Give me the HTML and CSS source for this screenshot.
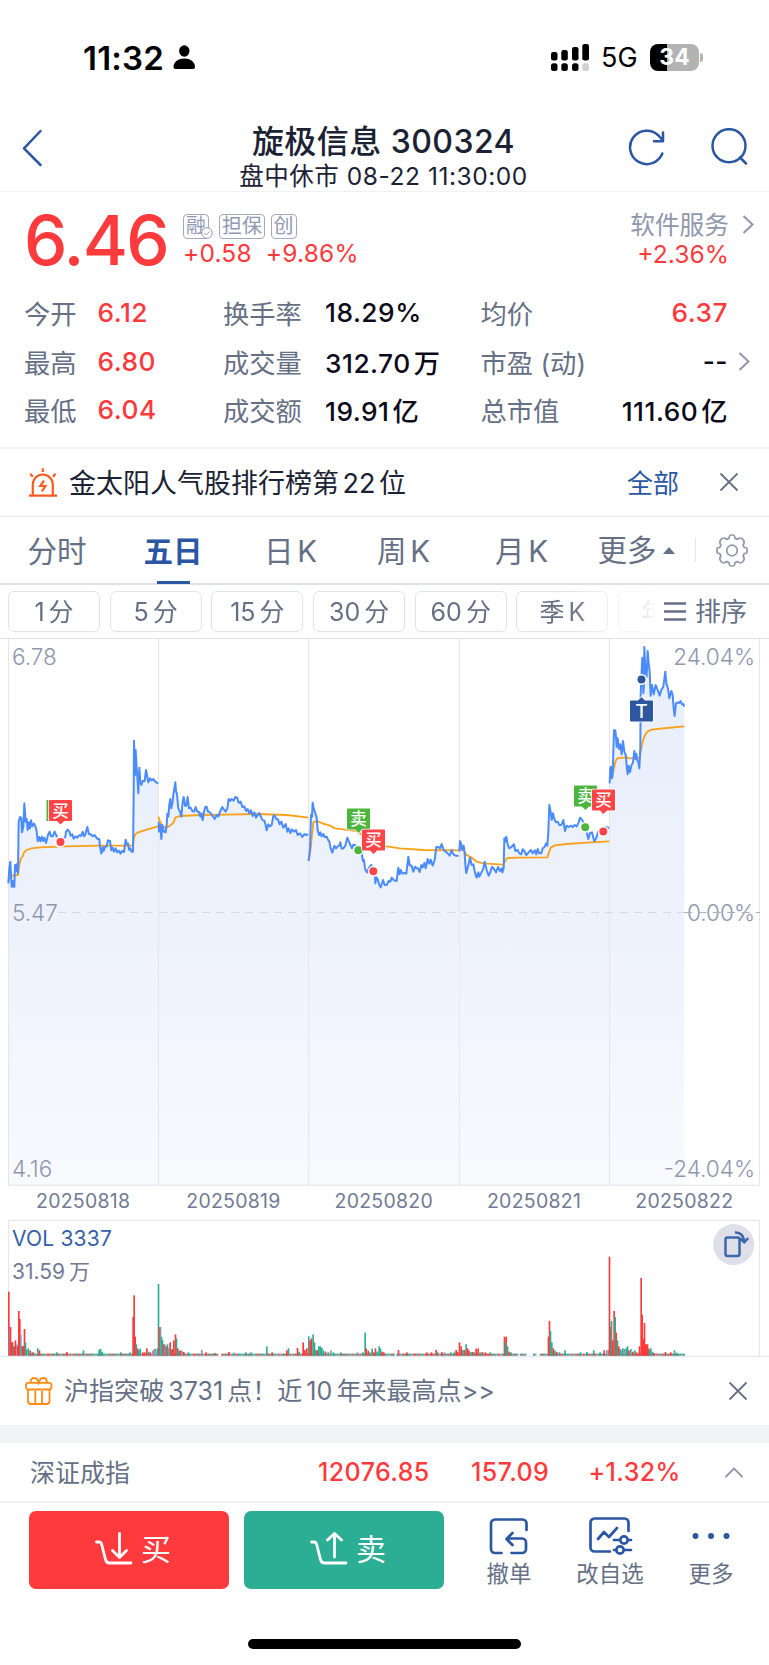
FILE: index.html
```html
<!DOCTYPE html>
<html lang="zh-CN">
<head>
<meta charset="UTF-8">
<meta name="viewport" content="width=device-width, initial-scale=1.0">
<title>旋极信息 300324</title>
<link rel="stylesheet" href="styles.css">
</head>
<body>
<div class="status-bar">
  <span class="time">11:32</span>
  <svg class="person" width="23" height="25" viewBox="0 0 23 25"><ellipse cx="11.3" cy="6" rx="5.2" ry="5.8"/><path d="M0.5 22c0-5 5-8.400 10.800-8.400S22 17 22 22c0 1.300-.8 2-2 2H2.500c-1.200 0-2-.7-2-2z"/></svg>
  <svg class="signal" width="39" height="28" viewBox="0 0 39 28">
    <rect x="0" y="8" width="6.500" height="8.500" rx="2.200"/><rect x="10.300" y="6" width="6.500" height="10.500" rx="2.200"/><rect x="21" y="3" width="6.500" height="13.500" rx="2.200"/><rect x="31.300" y="0" width="6.700" height="16.500" rx="2.200"/>
    <rect x="0" y="19.300" width="6.500" height="7.700" rx="2.500"/><rect x="10.300" y="19.300" width="6.500" height="7.700" rx="2.500"/><rect x="21" y="19.300" width="6.500" height="7.700" rx="2.500"/><rect x="31.300" y="19.300" width="6.700" height="7.700" rx="2.500" fill="#d0d0d0"/>
  </svg>
  <span class="network">5G</span>
  <div class="battery">34</div>
  <div class="battery-tip"></div>
</div>

<header class="header">
  <svg class="back" width="22" height="40" viewBox="0 0 22 40"><path d="M19.500 3 3 20.300 19.500 37"/></svg>
  <div class="title">
    <h1>旋极信息 300324</h1>
    <p>盘中休市 08-22 11:30:00</p>
  </div>
  <svg class="refresh" width="38" height="38" viewBox="0 0 38 38"><path d="M35.300 25.500A16.700 16.700 0 1 1 31.500 7.500L35 11.500M36 4.500v8.700h-9"/></svg>
  <svg class="search" width="38" height="38" viewBox="0 0 38 38"><circle cx="18" cy="17.700" r="16.500"/><path d="M29 29.500 35 35.500"/></svg>
</header>

<section class="quote">
  <div class="price">6.46</div>
  <div class="change">
    <div class="badges">
      <span class="badge margin">融<svg width="12" height="12" viewBox="0 0 12 12"><circle cx="6" cy="6" r="5.300"/><path d="M3.300 6 5.300 8 8.800 4.300"/></svg></span>
      <span class="badge">担保</span>
      <span class="badge">创</span>
    </div>
    <div class="delta"><span>+0.58</span><span>+9.86%</span></div>
  </div>
  <div class="sector">
    <span class="sector-name">软件服务</span>
    <span class="sector-change">+2.36%</span>
  </div>
  <svg class="more" width="12" height="19" viewBox="0 0 12 19"><path d="M1.500 1 10.500 9.500 1.500 18"/></svg>
</section>

<section class="stats">
  <span>今开</span><b class="red">6.12</b><span>换手率</span><b>18.29%</b><span>均价</span><b class="right red">6.37</b><i></i>
  <span>最高</span><b class="red">6.80</b><span>成交量</span><b>312.70<em>万</em></b><span>市盈 (动)</span><b class="right">--</b><svg width="12" height="19" viewBox="0 0 12 19"><path d="M1.500 1 10.500 9.500 1.500 18"/></svg>
  <span>最低</span><b class="red">6.04</b><span>成交额</span><b>19.91<em>亿</em></b><span>总市值</span><b class="right">111.60<em>亿</em></b><i></i>
</section>

<section class="notice">
  <svg class="siren" width="30" height="31" viewBox="0 0 30 31"><path d="M1 28.700H29M4.800 28V17.500a10 10 0 0 1 20 0V28M14.800 1.200V5M2.200 6.800 4.800 9.800M27.600 6.800 25 9.800"/><path class="bolt" d="M16 13.500 12.300 19h5L14 24.500"/></svg>
  <span class="notice-text">金太阳人气股排行榜第<em>22</em>位</span>
  <a class="all">全部</a>
  <svg class="close" width="20" height="20" viewBox="0 0 20 20"><path d="M1.500 1.500 18.500 18.500M18.500 1.500 1.500 18.500"/></svg>
</section>

<nav class="tabs">
  <a>分时</a>
  <a class="active">五日</a>
  <a>日 K</a>
  <a>周 K</a>
  <a>月 K</a>
  <a class="tab-more">更多<svg width="12" height="7" viewBox="0 0 12 7"><path d="M6 0 12 7H0z"/></svg></a>
  <span class="divider"></span>
  <svg class="gear" width="32" height="33" viewBox="-16 -16.500 32 33"><path d="M-3-12.200C-2.700-16-1.500-15.500 0-15.500S2.700-16 3-12.200L5.600-11.100C8.600-13.500 9.300-12.500 10.500-11.400S13.500-8.600 11.100-5.600L12.200-3C16-2.700 15-1.500 15 0S16 2.700 12.200 3L11.100 5.600C13.500 8.600 11.600 10.300 10.500 11.400S8.600 13.500 5.600 11.100L3 12.200C2.700 16 1.500 15.500 0 15.500S-2.700 16-3 12.200L-5.600 11.100C-8.600 13.500-9.400 12.500-10.500 11.400S-13.500 8.600-11.100 5.600L-12.200 3C-16 2.700-15 1.500-15 0S-16-2.700-12.200-3L-11.100-5.600C-13.500-8.600-11.600-10.300-10.500-11.400S-8.600-13.500-5.600-11.100Z"/><circle r="5.300"/></svg>
</nav>

<div class="periods">
  <div class="period-list">
    <a>1 分</a><a>5 分</a><a>15 分</a><a>30 分</a><a>60 分</a><a>季 K</a><a>年 K</a>
  </div>
  <div class="sort">
    <svg width="22" height="19" viewBox="0 0 22 19"><path d="M0 1.500H22M0 9.500H22M0 17.500H22"/></svg>
    <span>排序</span>
  </div>
</div>

<svg class="chart" width="769" height="547" viewBox="0 4 769 547">
  <defs>
    <linearGradient id="fill" x1="0" y1="420" x2="0" y2="1650" gradientUnits="userSpaceOnUse">
      <stop offset="0" stop-color="#eaf0fb"/>
      <stop offset="0.400" stop-color="#eef2fc"/>
      <stop offset="1" stop-color="#f9fafe"/>
    </linearGradient>
  </defs>
  <g id="areas" transform="scale(0.33333)"></g>
  <path class="grid" d="M8.500 4V550M158.500 4V550M308.700 4V550M459.300 4V550M609.500 4V550M759.500 4V550M8 550.300H760"/>
  <path class="zero" d="M58 277.500H684"/>
  <g id="lines" transform="scale(0.33333)"></g>

  <g class="axis">
    <text x="12" y="29.500">6.78</text>
    <text x="12" y="285.500">5.47</text>
    <text x="12" y="541.500">4.16</text>
    <text class="end" x="755" y="29.500">24.04%</text>
    <text class="end" x="755" y="285.500">0.00%</text>
    <text class="end" x="755" y="541.500">-24.04%</text>
  </g>
  <path class="zero dark" d="M684 277.500H760"/>

  <!-- buy / sell markers -->
  <g class="marker">
    <path class="sell" d="M46.500 165h20v21h-20z"/>
    <circle class="sell" cx="59.500" cy="207" r="4"/>
    <path class="buy" d="M50 165h21a1 1 0 0 1 1 1v19a1 1 0 0 1-1 1H64l-3.500 3.500L57 186H50a1 1 0 0 1-1-1V166a1 1 0 0 1 1-1z"/>
    <text x="60.500" y="181.500">买</text>
    <circle class="buy" cx="60.500" cy="207" r="4"/>

    <path class="sell" d="M348 173.500h21a1 1 0 0 1 1 1v19a1 1 0 0 1-1 1H362l-3.500 3.500-3.500-3.500H348a1 1 0 0 1-1-1v-19a1 1 0 0 1 1-1z"/>
    <text x="358.500" y="190">卖</text>
    <circle class="sell" cx="358.300" cy="215.300" r="4"/>
    <path class="buy" d="M363 194.500h21a1 1 0 0 1 1 1v19a1 1 0 0 1-1 1H377l-3.500 3.500-3.500-3.500H363a1 1 0 0 1-1-1v-19a1 1 0 0 1 1-1z"/>
    <text x="373.500" y="211">买</text>
    <circle class="buy" cx="373.300" cy="236.300" r="4"/>

    <path class="sell" d="M575 150.500h21a1 1 0 0 1 1 1v19a1 1 0 0 1-1 1H589l-3.500 3.500-3.500-3.500H575a1 1 0 0 1-1-1v-19a1 1 0 0 1 1-1z"/>
    <text x="585.500" y="167">卖</text>
    <circle class="sell" cx="585.200" cy="192.300" r="4"/>
    <path class="buy" d="M593 154.500h21a1 1 0 0 1 1 1v19a1 1 0 0 1-1 1H607l-3.500 3.500-3.500-3.500H593a1 1 0 0 1-1-1v-19a1 1 0 0 1 1-1z"/>
    <text x="603.500" y="171">买</text>
    <circle class="buy" cx="603.300" cy="196.500" r="4"/>

    <path class="both" d="M631 65.500h7l3.500-3.500 3.500 3.500h7a1 1 0 0 1 1 1v19a1 1 0 0 1-1 1H631a1 1 0 0 1-1-1v-19a1 1 0 0 1 1-1z"/>
    <text class="t" x="641.500" y="82.500">T</text>
    <circle class="both" cx="641.500" cy="44.500" r="4"/>
  </g>
</svg>

<div class="dates">
  <span>20250818</span><span>20250819</span><span>20250820</span><span>20250821</span><span>20250822</span>
</div>

<svg class="volume" width="769" height="137" viewBox="0 60 769 137">
  <path class="grid" d="M8 60.500H760M8.500 60V196M759.500 60V196M0 196.400H769"/>
  <g id="bars" transform="scale(0.33333)"></g>
  <text class="vol" x="12" y="85.500">VOL 3337</text>
  <text class="cap" x="12" y="118.800">31.59<tspan dx="4">万</tspan></text>
  <circle class="rotate-bg" cx="733.700" cy="84.600" r="20.500"/>
  <path class="rotate" d="M727.500 77.500h10a2 2 0 0 1 2 2v14.500a2 2 0 0 1-2 2h-10a2 2 0 0 1-2-2v-14.500a2 2 0 0 1 2-2zM735 72.500c5-.3 8.500 3 9.300 9.200M740 78.500l4.300 3.700 4-4.200"/>
</svg>

<section class="promo">
  <svg class="gift" width="28" height="28" viewBox="0 0 28 28"><rect x="1" y="5.800" width="25.500" height="6.700" rx="2.500"/><path d="M3 12.500V24a3 3 0 0 0 3 3H21.500a3 3 0 0 0 3-3V12.500M10.300 14V26.500M17 14V26.500M5.500 5.500C5.500 2 7.500 1 9.200 1S12.800 3 13.700 5.800C14.600 3 16.500 1 18.200 1S22 2 22 5.500"/></svg>
  <span class="promo-text">沪指突破<em>3731</em>点！近<em>10</em>年来最高点&gt;&gt;</span>
  <svg class="close" width="20" height="20" viewBox="0 0 20 20"><path d="M1.500 1.500 18.500 18.500M18.500 1.500 1.500 18.500"/></svg>
</section>

<section class="index-row">
  <span class="index-name">深证成指</span>
  <b class="index-value">12076.85</b>
  <b class="index-diff">157.09</b>
  <b class="index-pct">+1.32%</b>
  <svg class="up" width="20" height="11" viewBox="0 0 20 11"><path d="M1.500 10 10 1.500 18.500 10"/></svg>
</section>

<footer class="actions">
  <button class="btn btn-buy">
    <svg width="38" height="34" viewBox="0 0 38 34"><path d="M1.500 10H4Q6 10 6.700 12.500L10.500 27.500Q11.500 31 14.500 31H36M24.500 1.500V25M17.500 18.500 24.500 25.500 31.500 18.500"/></svg>
    <span>买</span>
  </button>
  <button class="btn btn-sell">
    <svg width="38" height="34" viewBox="0 0 38 34"><path d="M1.500 10H4Q6 10 6.700 12.500L10.500 27.500Q11.500 31 14.500 31H36M24.500 25V1.500M17.500 8 24.500 1.500 31.500 8"/></svg>
    <span>卖</span>
  </button>
  <a class="tool">
    <svg width="42" height="40" viewBox="0 0 42 40"><path d="M13.500 37H7a4 4 0 0 1-4-4V7.500a4 4 0 0 1 4-4H34.500a4 4 0 0 1 4 4V14M23.500 37H34a4 4 0 0 0 4-4V26.500a4 4 0 0 0-4-4H19M24.500 17 18.500 23 24.500 29"/></svg>
    <span>撤单</span>
  </a>
  <a class="tool">
    <svg width="46" height="40" viewBox="0 0 46 40"><path d="M23 35.500H7.500a4 4 0 0 1-4-4V6.500a4 4 0 0 1 4-4H37.500a4 4 0 0 1 4 4V15M11 23 17 16 22 21 30 12M27 24H32.500M41.500 24H44M27 34H29M37.500 34H44"/><circle cx="37" cy="24" r="3.700"/><circle cx="33" cy="34" r="3.700"/></svg>
    <span>改自选</span>
  </a>
  <a class="tool">
    <svg class="dots" width="40" height="40" viewBox="0 0 40 40"><circle cx="4.500" cy="20" r="3"/><circle cx="20" cy="20" r="3"/><circle cx="35.500" cy="20" r="3"/></svg>
    <span>更多</span>
  </a>
</footer>
<div class="home-bar"></div>

<script>
// price and average points per trading day
const days = [
  {
    price: '25,745 28,700 31,680 33,715 35,755 38,738 40,755 43,755 45,690 48,708 50,688 54,715 56,560 60,546 64,550 66,592 70,575 73,505 77,560 80,552 83,585 87,562 90,580 93,556 97,574 102,566 107,576 110,590 113,618 118,606 121,619 126,605 129,618 133,608 138,624 144,600 149,590 153,604 158,604 164,590 170,604 176,612 182,621 190,612 196,606 198,590 203,584 208,590 212,602 217,598 221,611 227,604 232,608 238,600 243,603 248,590 252,604 256,598 262,576 267,598 273,598 278,604 283,600 288,606 293,612 298,612 300,635 304,656 308,636 311,648 315,636 320,634 324,616 330,618 334,646 338,638 342,650 347,640 351,652 357,647 361,656 366,648 372,651 377,614 381,628 384,626 387,644 391,640 394,650 399,650 401,480 402,317 405,420 407,345 410,400 413,440 415,475 418,398 421,440 424,450 428,438 434,438 438,405 441,420 445,442 450,430 455,436 460,432 466,440 474,446',
    avg: '25,740 30,728 36,722 54,720 58,690 62,672 68,664 72,652 80,645 95,640 120,637 200,634 300,632 399,632 402,608 406,598 415,592 440,584 474,574'
  },
  {
    price: '476,560 477,590 481,570 484,612 487,570 492,590 497,592 500,570 502,536 505,545 508,508 511,492 514,520 518,500 521,472 526,442 528,468 531,478 535,520 540,530 544,545 547,510 551,486 555,512 559,512 563,486 567,520 572,518 577,528 582,530 587,516 592,530 597,530 601,545 604,535 608,556 612,530 616,516 620,515 624,530 630,532 636,540 644,552 650,540 655,545 660,530 667,516 672,524 677,530 682,520 686,492 690,498 695,492 701,497 706,486 712,489 716,503 722,500 727,516 733,514 738,528 743,522 748,535 753,526 758,543 763,532 768,548 773,540 778,534 784,548 788,556 793,557 797,570 800,586 805,568 810,574 815,570 820,543 824,541 829,552 834,553 839,568 844,560 850,578 857,567 862,590 866,580 871,594 876,583 882,590 888,585 893,600 900,595 907,606 913,597 918,600 925,598',
    avg: '475,545 480,560 490,577 505,575 520,564 526,548 540,543 600,540 680,539 770,537 860,540 926,548'
  },
  {
    price: '926,678 930,640 933,540 936,545 938,503 941,520 945,532 950,548 953,585 957,600 961,592 965,604 970,597 974,606 980,605 984,614 988,620 992,640 997,653 1003,632 1008,640 1013,634 1018,632 1021,622 1025,641 1030,640 1036,632 1042,608 1047,620 1052,632 1056,640 1060,629 1065,630 1075,646 1085,655 1089,678 1092,675 1095,702 1101,712 1106,700 1114,690 1120,708 1125,725 1126,745 1129,727 1134,735 1137,748 1142,757 1145,748 1149,735 1154,750 1160,750 1166,738 1171,740 1175,728 1182,736 1190,738 1195,698 1199,718 1202,705 1208,716 1214,714 1219,716 1225,665 1229,690 1235,693 1240,710 1245,695 1250,700 1254,700 1259,711 1264,690 1268,697 1273,684 1277,700 1283,672 1288,686 1292,674 1298,692 1304,675 1309,636 1315,636 1320,640 1325,627 1331,645 1337,650 1343,655 1349,662 1355,645 1360,658 1367,662 1376,662',
    avg: '926,678 932,640 936,600 940,562 950,558 970,566 990,572 1005,580 1030,583 1070,588 1120,625 1160,634 1200,640 1270,645 1376,646'
  },
  {
    price: '1378,650 1380,618 1384,628 1386,645 1391,632 1394,655 1397,700 1399,714 1405,690 1410,668 1415,690 1420,688 1425,712 1430,728 1435,712 1438,725 1443,715 1450,700 1454,680 1460,705 1466,722 1470,715 1476,695 1482,702 1488,712 1494,696 1500,708 1505,700 1507,712 1511,700 1513,610 1516,620 1519,605 1523,628 1528,640 1534,636 1542,628 1546,648 1553,645 1558,655 1564,658 1568,643 1573,648 1579,660 1586,652 1593,645 1598,655 1605,646 1609,658 1613,642 1618,655 1624,655 1628,640 1634,636 1638,625 1642,632 1645,590 1648,510 1652,530 1655,555 1659,535 1663,552 1668,562 1673,560 1678,570 1684,570 1690,555 1695,588 1700,572 1706,576 1713,572 1718,576 1724,570 1730,574 1736,562 1740,548 1745,553 1750,562 1756,577 1760,592 1765,612 1770,594 1776,592 1780,608 1783,619 1789,608 1795,590 1803,588 1810,589 1818,577 1828,578',
    avg: '1378,640 1390,645 1400,660 1415,668 1430,680 1450,685 1510,689 1516,677 1522,669 1560,668 1642,667 1648,650 1652,638 1665,631 1700,627 1760,623 1828,619'
  },
  {
    price: '1829,445 1831,400 1833,395 1836,430 1838,420 1842,286 1846,286 1848,305 1850,336 1853,310 1857,342 1861,328 1865,358 1869,318 1873,350 1878,362 1880,395 1883,418 1886,392 1890,412 1894,392 1899,382 1903,348 1906,372 1909,356 1912,376 1915,382 1918,400 1921,340 1922,180 1924,130 1927,68 1930,175 1932,150 1933,36 1936,100 1940,125 1943,48 1946,85 1949,110 1952,182 1956,150 1961,178 1967,150 1973,165 1979,182 1984,165 1990,155 1996,110 1999,145 2004,160 2008,190 2014,168 2018,180 2021,220 2024,243 2028,205 2033,202 2038,204 2042,198 2046,208 2050,207 2053,215',
    avg: '1829,402 1833,410 1838,415 1843,395 1847,378 1852,370 1875,367 1890,370 1918,370 1924,340 1928,320 1935,300 1942,290 1955,284 2000,279 2053,274'
  }
];

let areas = '';
let lines = '';
days.forEach(({ price, avg }) => {
  const first = price.split(',')[0];
  const last = price.split(' ').pop().split(',')[0];
  areas += `<polygon fill="url(#fill)" points="${first},1650 ${price} ${last},1650"/>`;
  lines += `<polyline class="avg-line" points="${avg}"/><polyline class="price-line" points="${price}"/>`;
});
document.getElementById('areas').innerHTML = areas;
document.getElementById('lines').innerHTML = lines;

// volume: [x, height, colour]
const colors = { r: '#ff3a3c', g: '#2bae94', n: '#8f97ae' };
const peaks = [
  [26,192,'r'],[28,75,'n'],[31,86,'r'],[34,40,'r'],[37,40,'r'],[40,28,'g'],[43,28,'r'],[46,46,'r'],[50,34,'n'],[53,28,'r'],[56,134,'r'],[59,110,'r'],[62,63,'n'],[65,28,'g'],[68,28,'r'],[70,28,'r'],[73,80,'r'],[76,40,'g'],[79,18,'g'],[84,22,'g'],[90,16,'r'],[96,10,'g'],[100,10,'r'],
  [113,22,'g'],[118,16,'r'],[170,10,'g'],[200,11,'r'],[250,16,'g'],[297,18,'g'],[301,20,'g'],[306,12,'g'],[362,10,'g'],[390,10,'g'],[399,116,'r'],[402,181,'r'],[405,57,'r'],[408,34,'g'],[412,22,'r'],[416,16,'g'],[420,21,'g'],[428,10,'r'],[434,10,'r'],[440,22,'r'],[445,12,'g'],[450,10,'r'],[458,15,'n'],[462,20,'n'],[466,20,'n'],[472,22,'g'],
  [475,215,'g'],[478,86,'r'],[481,86,'n'],[484,57,'g'],[487,46,'g'],[491,34,'r'],[494,34,'n'],[498,28,'r'],[502,34,'g'],[506,22,'n'],[510,40,'r'],[514,18,'g'],[517,20,'r'],[521,46,'r'],[526,64,'r'],[529,52,'g'],[533,22,'r'],[537,14,'g'],[541,16,'r'],[546,14,'n'],[551,11,'r'],[565,10,'g'],[605,17,'n'],[618,10,'r'],[645,8,'g'],[686,11,'r'],[701,9,'n'],[737,10,'g'],[752,10,'g'],
  [800,28,'g'],[816,10,'r'],[865,22,'g'],[860,16,'r'],[892,23,'r'],[897,12,'g'],[909,40,'r'],[914,17,'r'],[920,22,'r'],[926,58,'g'],[930,46,'r'],[934,52,'r'],[939,64,'g'],[943,40,'g'],[947,17,'g'],[951,16,'r'],[956,28,'g'],[960,28,'g'],[965,24,'g'],[970,16,'g'],[976,12,'r'],[984,10,'g'],[992,16,'n'],[1000,10,'g'],[1022,10,'g'],[1072,10,'n'],[1088,10,'g'],
  [1095,69,'g'],[1098,22,'r'],[1104,15,'r'],[1110,10,'g'],[1116,21,'g'],[1121,10,'r'],[1126,22,'r'],[1131,12,'g'],[1137,28,'g'],[1141,22,'g'],[1146,12,'r'],[1151,10,'r'],[1195,17,'r'],[1220,10,'r'],[1280,10,'r'],[1294,10,'r'],[1308,17,'r'],[1313,10,'g'],[1325,11,'r'],[1333,10,'n'],[1352,10,'g'],[1362,10,'g'],[1368,17,'r'],[1372,11,'r'],
  [1378,40,'r'],[1383,28,'r'],[1388,17,'g'],[1393,17,'r'],[1398,34,'g'],[1402,22,'r'],[1406,16,'r'],[1412,11,'g'],[1418,11,'r'],[1423,10,'g'],[1428,21,'r'],[1434,22,'r'],[1440,10,'g'],[1447,11,'r'],[1456,10,'r'],[1470,10,'g'],[1513,57,'r'],[1518,57,'r'],[1516,40,'g'],[1522,28,'g'],[1527,12,'r'],[1533,10,'g'],
  [1645,57,'r'],[1648,104,'r'],[1651,74,'g'],[1655,40,'g'],[1659,22,'r'],[1664,16,'g'],[1670,11,'r'],[1678,10,'g'],[1695,16,'g'],[1741,10,'g'],[1760,11,'g'],[1781,16,'g'],[1800,10,'g'],[1812,16,'r'],[1820,17,'n'],[1825,17,'n'],
  [1828,297,'r'],[1831,86,'r'],[1834,104,'g'],[1838,46,'r'],[1842,134,'r'],[1845,116,'g'],[1848,69,'r'],[1852,46,'g'],[1856,28,'r'],[1860,20,'g'],[1864,16,'n'],[1868,22,'g'],[1873,20,'n'],[1878,22,'g'],[1882,28,'g'],[1886,16,'r'],[1892,20,'g'],[1898,12,'r'],[1904,16,'g'],[1910,10,'r'],[1918,28,'r'],
  [1923,233,'r'],[1926,122,'r'],[1929,51,'r'],[1933,98,'r'],[1936,34,'r'],[1939,34,'r'],[1942,34,'r'],[1945,22,'r'],[1948,17,'g'],[1952,22,'g'],[1957,12,'g'],[1962,8,'r'],[1996,11,'r'],[2012,10,'r'],[2023,16,'g'],[2030,9,'g']
];
let bars = '';
const gaps = [[655, 663], [1181, 1190], [1553, 1560], [1576, 1598], [1606, 1618]];
for (let x = 86, i = 0; x < 2056; x += 5, i++) {
  if (gaps.some(([a, b]) => x > a && x < b)) continue;
  const c = 'rgnggrrgrgn'[(i * 7 + (i >> 2) * 3) % 11];
  bars += `<rect x="${x - 2}" y="581" width="5.500" height="6" fill="${colors[c]}"/>`;
}
peaks.forEach(([x, h, c]) => {
  bars += `<rect x="${x - 2}" y="${587 - h}" width="5" height="${h}" fill="${colors[c]}"/>`;
});
document.getElementById('bars').innerHTML = bars;
</script>
</body>
</html>
```
FILE: styles.css
```css
* {
  box-sizing: border-box;
}
body {
  margin: 0;
  width: 769px;
  height: 1665px;
  background: #fff;
  color: #1b2233;
  font-family: Inter, "Noto Sans CJK SC", sans-serif;
  overflow: hidden;
}
svg {
  display: block;
  flex: none;
}
h1, p {
  margin: 0;
}
em, i {
  font-style: normal;
}
span, b, a {
  white-space: nowrap;
}

/* status bar */
.status-bar {
  display: flex;
  align-items: center;
  height: 115px;
  padding-left: 83px;
  color: #000;
}
.time {
  width: 90px;
  font-size: 33px;
  font-weight: 600;
  letter-spacing: 0.200px;
}
.signal {
  margin-left: 355px;
}
.network {
  width: 49px;
  margin-left: 11px;
  font-size: 27px;
  font-weight: 400;
}
.battery {
  width: 49px;
  height: 27px;
  border-radius: 8px;
  background: linear-gradient(90deg, #000 35%, #b3b3b3 35%);
  color: #fff;
  font-size: 23px;
  font-weight: 700;
  line-height: 27px;
  text-align: center;
}
.battery-tip {
  width: 3px;
  height: 9px;
  margin-left: 1px;
  border-radius: 0 4px 4px 0;
  background: #b3b3b3;
}

/* header */
.header {
  display: flex;
  height: 77px;
  padding: 13px 20px 0 21px;
  border-bottom: 1px solid #f0f1f4;
}
.header svg {
  fill: none;
  stroke: #2b56a4;
  stroke-width: 2.500;
  stroke-linecap: round;
  stroke-linejoin: round;
}
.title {
  width: 490px;
  margin: -5px 0 0 96px;
  text-align: center;
}
.title h1 {
  font-size: 32px;
  font-weight: 500;
  line-height: 38px;
  letter-spacing: 0.450px;
}
.title p {
  font-size: 24.500px;
  line-height: 30px;
  letter-spacing: 0.550px;
}
.refresh {
  margin-left: -1px;
}
.search {
  margin-left: 46px;
}

/* quote */
.quote {
  display: flex;
  height: 96px;
  padding: 19px 0 0 24px;
  color: #ff3a3c;
}
.price {
  width: 159px;
  font-size: 69px;
  font-weight: 500;
  line-height: 58px;
  letter-spacing: -1.700px;
}
.change {
  width: 445px;
}
.badges {
  display: flex;
  gap: 5.500px;
  margin-top: 3px;
}
.badge {
  position: relative;
  height: 25px;
  padding: 0 2px;
  border: 1px solid #a3a8c0;
  border-radius: 4px;
  color: #9298b4;
  font-size: 20px;
  line-height: 23px;
}
.badge.margin {
  margin-right: 4.500px;
}
.badge svg {
  position: absolute;
  right: -5px;
  bottom: -1px;
  fill: #fff;
  stroke: #9298b4;
}
.delta {
  display: flex;
  gap: 14px;
  margin-top: -1px;
  font-size: 24.500px;
  line-height: 30px;
  letter-spacing: 0.200px;
}
.sector {
  display: flex;
  flex-direction: column;
  align-items: flex-end;
  width: 101px;
  font-size: 24.700px;
  line-height: 28.500px;
}
.sector-name {
  color: #9097ac;
}
.more {
  margin: 4px 0 0 13px;
}
.more path, .stats path {
  fill: none;
  stroke: #9097ac;
  stroke-width: 2;
}

/* stats */
.stats {
  display: grid;
  grid-template-columns: 73.500px 125.500px 102px 155.500px 110px 137.500px 30px;
  grid-auto-rows: 48.800px;
  align-items: center;
  height: 161px;
  padding-left: 24px;
  border-bottom: 2px solid #f2f3f6;
  color: #667085;
  font-size: 26.300px;
}
.stats b {
  color: #0e0a1a;
  font-weight: 500;
  letter-spacing: 0.500px;
}
.stats b.red {
  color: #ff3a3c;
}
.stats .right {
  text-align: right;
}
.stats em {
  margin-left: 3px;
}
.stats svg {
  margin-left: 10px;
}

/* notice */
.notice {
  display: flex;
  align-items: center;
  height: 68px;
  padding-left: 28px;
  border-bottom: 1px solid #e6e7ed;
  font-size: 27px;
}
.siren {
  fill: none;
  stroke: #ff5a1f;
  stroke-width: 2.200;
}
.notice-text {
  width: 558px;
  margin: -3px 0 0 11px;
}
.notice-text em {
  margin: 0 3.500px;
}
.promo-text em {
  margin: 0 4px;
}
.all {
  margin-top: -3px;
  color: #2b56a4;
  font-size: 26px;
}
.close {
  margin: -1px 0 0 40px;
  fill: none;
  stroke: #667085;
  stroke-width: 1.800;
}

/* tabs */
.tabs {
  display: grid;
  grid-template-columns: 116px 120.500px 113px 118px 102.500px 97px 21px 32px;
  align-items: center;
  height: 68px;
  padding-left: 27.500px;
  border-bottom: 2px solid #dfe1ea;
  color: #667085;
  font-size: 29.500px;
  word-spacing: -4.500px;
}
.tabs a {
  height: 66px;
  line-height: 68px;
}
.tabs .active {
  position: relative;
  color: #2b56a4;
  font-weight: 600;
}
.active::after {
  content: "";
  position: absolute;
  left: 13px;
  bottom: -1px;
  width: 33px;
  height: 3px;
  background: #2b56a4;
}
.tab-more {
  display: flex;
  align-items: center;
  gap: 6px;
}
.tab-more svg {
  fill: #667085;
}
.divider {
  width: 1px;
  height: 24px;
  background: #e6e7ed;
}
.gear {
  fill: none;
  stroke: #8f97ac;
  stroke-width: 1.700;
}

/* periods */
.periods {
  display: flex;
  height: 54px;
  padding: 6px 0 0 8px;
  border-bottom: 1px solid #dfe1ea;
  color: #667085;
  font-size: 25px;
}
.period-list {
  display: flex;
  gap: 9.700px;
  width: 647px;
  overflow: hidden;
  word-spacing: -3px;
  mask-image: linear-gradient(90deg, #000 560px, transparent 650px);
}
.period-list a {
  flex: none;
  width: 92px;
  height: 41px;
  border: 1.500px solid #e1e3eb;
  border-radius: 6px;
  line-height: 40px;
  text-align: center;
}
.sort {
  display: flex;
  align-items: center;
  gap: 9px;
  height: 41px;
  margin-left: 9px;
}
.sort span {
  margin-top: -4px;
  font-size: 26px;
}
.sort path {
  stroke: #667085;
  stroke-width: 2.500;
}

/* chart */
.grid {
  fill: none;
  stroke: #e4e5ec;
}
.zero {
  stroke: #d5d9e4;
  stroke-dasharray: 8 6.400;
}
.zero.dark {
  stroke: #a9aec0;
}
.price-line {
  fill: none;
  stroke: #4a8bff;
  stroke-width: 6;
  stroke-linejoin: round;
}
.avg-line {
  fill: none;
  stroke: #f9a11b;
  stroke-width: 5.500;
  stroke-linejoin: round;
}
.axis {
  fill: #9096ae;
  font-size: 22.500px;
  font-weight: 300;
}
.end {
  text-anchor: end;
}
.marker circle {
  stroke: #fff;
  stroke-width: 3;
  paint-order: stroke;
}
.marker path {
  stroke: #fff;
  stroke-width: 1.500;
  paint-order: stroke;
}
.marker .buy {
  fill: #ff4548;
}
.marker .sell {
  fill: #4cb53c;
}
.marker .both {
  fill: #2f57a0;
}
.marker text {
  fill: #fff;
  font-size: 16.500px;
  font-weight: 500;
  text-anchor: middle;
}
.marker .t {
  font-size: 19px;
}
.dates {
  display: grid;
  grid-template-columns: repeat(5, 150.300px);
  height: 34px;
  padding-left: 8px;
  color: #737a93;
  font-size: 19.500px;
  line-height: 31px;
  letter-spacing: 0.250px;
  text-align: center;
}
.vol {
  fill: #3560a8;
  font-size: 21px;
  letter-spacing: 0.200px;
}
.cap {
  fill: #737a93;
  font-size: 21px;
}
.rotate-bg {
  fill: #dedfe8;
}
.rotate {
  fill: none;
  stroke: #3d67ad;
  stroke-width: 2.500;
}

/* promo */
.promo {
  display: flex;
  align-items: center;
  height: 68px;
  padding-left: 25px;
  color: #667085;
  font-size: 25px;
}
.gift {
  fill: none;
  stroke: #ff8a14;
  stroke-width: 1.800;
}
.promo-text {
  width: 624px;
  margin: -4px 0 0 11px;
  letter-spacing: 0.050px;
}

/* index row */
.index-row {
  display: flex;
  align-items: center;
  height: 78px;
  padding-left: 30px;
  border-top: 18px solid #f2f3f6;
  border-bottom: 2px solid #f0f1f4;
  color: #667085;
  font-size: 25px;
}
.index-row b {
  color: #ff3a3c;
  font-weight: 500;
  letter-spacing: 0.400px;
}
.index-name {
  width: 288px;
  margin-top: -3px;
}
.index-value {
  width: 153px;
}
.index-diff {
  width: 117.500px;
}
.index-pct {
  width: 135px;
}
.up {
  fill: none;
  stroke: #8f97ac;
  stroke-width: 1.800;
}

/* actions */
.actions {
  display: flex;
  height: 136px;
  padding: 8px 0 0 29px;
}
.btn {
  display: flex;
  align-items: center;
  justify-content: center;
  gap: 8px;
  width: 200px;
  height: 78px;
  margin-right: 15px;
  padding: 0 0 2px 8px;
  border: 0;
  border-radius: 7px;
  color: #fff;
  font-family: inherit;
  font-size: 30px;
}
.btn span {
  margin-top: -4px;
}
.btn svg {
  fill: none;
  stroke: #fff;
  stroke-width: 2.800;
  stroke-linecap: round;
  stroke-linejoin: round;
}
.btn-buy {
  background: #ff3a3c;
}
.btn-sell {
  background: #2bae94;
}
.tool {
  display: flex;
  flex-direction: column;
  align-items: center;
  gap: 1px;
  width: 102px;
  margin-left: -1px;
  padding-top: 5px;
  color: #667085;
  font-size: 22.500px;
  line-height: 34px;
}
.tool svg {
  fill: none;
  stroke: #2b56a4;
  stroke-width: 2.700;
  stroke-linecap: round;
  stroke-linejoin: round;
}
.tool .dots {
  fill: #2b56a4;
  stroke: none;
}
.home-bar {
  width: 273px;
  height: 10px;
  margin-left: 248px;
  border-radius: 5px;
  background: #000;
}
```
